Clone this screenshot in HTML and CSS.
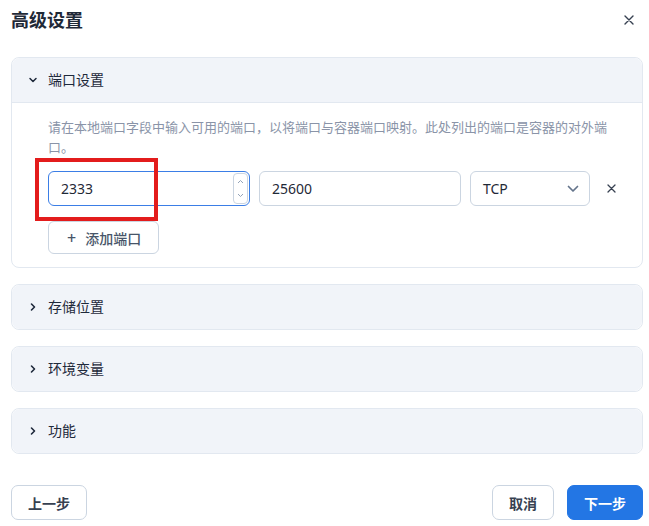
FILE: index.html
```html
<!DOCTYPE html>
<html>
<head>
    <meta charset="UTF-8">
    <title>高级设置</title>
    <link rel="stylesheet" href="styles.css">
</head>
<body>
    <div class="dialog">
        <div class="dialog-head">
            <h1>高级设置</h1>
            <button class="close" type="button">
                <svg width="10" height="10" viewBox="0 0 10 10"><path d="M1 1L9 9M9 1L1 9" stroke="#374151" stroke-width="1.4" stroke-linecap="round"/></svg>
            </button>
        </div>

        <div class="panel open">
            <div class="panel-head">
                <svg class="arrow" width="10" height="10" viewBox="0 0 10 10"><path d="M2 3.5L5 6.5L8 3.5" fill="none" stroke="#1e293b" stroke-width="1.5" stroke-linecap="round" stroke-linejoin="round"/></svg>
                <span>端口设置</span>
            </div>
            <div class="panel-body">
                <p class="desc">请在本地端口字段中输入可用的端口，以将端口与容器端口映射。此处列出的端口是容器的对外端口。</p>
                <div class="port-row">
                    <div class="field focus">
                        <span class="val">2333</span>
                        <span class="spin">
                            <svg width="7" height="5" viewBox="0 0 7 5"><path d="M1 4L3.5 1.5L6 4" fill="none" stroke="#94a3b8" stroke-width="1"/></svg>
                            <svg width="7" height="5" viewBox="0 0 7 5"><path d="M1 1L3.5 3.5L6 1" fill="none" stroke="#94a3b8" stroke-width="1"/></svg>
                        </span>
                    </div>
                    <div class="field"><span class="val">25600</span></div>
                    <div class="field select">
                        <span class="val">TCP</span>
                        <svg width="12" height="8" viewBox="0 0 12 8"><path d="M1.5 1.5L6 6L10.5 1.5" fill="none" stroke="#64748b" stroke-width="1.7" stroke-linecap="round" stroke-linejoin="round"/></svg>
                    </div>
                    <button class="remove" type="button">
                        <svg width="9" height="9" viewBox="0 0 9 9"><path d="M1 1L8 8M8 1L1 8" stroke="#374151" stroke-width="1.3" stroke-linecap="round"/></svg>
                    </button>
                </div>
                <button class="add" type="button"><span class="plus">+</span>添加端口</button>
            </div>
            <div class="mark"></div>
        </div>

        <div class="panel">
            <div class="panel-head">
                <svg class="arrow" width="10" height="10" viewBox="0 0 10 10"><path d="M3.5 2L6.5 5L3.5 8" fill="none" stroke="#1e293b" stroke-width="1.6" stroke-linecap="round" stroke-linejoin="round"/></svg>
                <span>存储位置</span>
            </div>
        </div>
        <div class="panel">
            <div class="panel-head">
                <svg class="arrow" width="10" height="10" viewBox="0 0 10 10"><path d="M3.5 2L6.5 5L3.5 8" fill="none" stroke="#1e293b" stroke-width="1.6" stroke-linecap="round" stroke-linejoin="round"/></svg>
                <span>环境变量</span>
            </div>
        </div>
        <div class="panel">
            <div class="panel-head">
                <svg class="arrow" width="10" height="10" viewBox="0 0 10 10"><path d="M3.5 2L6.5 5L3.5 8" fill="none" stroke="#1e293b" stroke-width="1.6" stroke-linecap="round" stroke-linejoin="round"/></svg>
                <span>功能</span>
            </div>
        </div>

        <div class="dialog-foot">
            <button class="btn" type="button">上一步</button>
            <div class="right">
                <button class="btn" type="button">取消</button>
                <button class="btn primary" type="button">下一步</button>
            </div>
        </div>
    </div>
</body>
</html>
```

FILE: styles.css
```css
body,p,h1{margin:0;}
body{
    background:#fff;
    font-family:"Noto Sans","Noto Sans CJK SC",sans-serif;
    color:#1e293b;
}
button{
    font-family:inherit;
    cursor:pointer;
}
.dialog{
    width:632px;
    padding:0 6px 0 11px;
}
.dialog-head{
    display:flex;
    align-items:center;
    justify-content:space-between;
    height:40px;
    margin-bottom:17px;
}
.dialog-head h1{
    font-size:18px;
    font-weight:700;
    color:#1f2937;
    line-height:24px;
}
.dialog-head .close{
    display:flex;
    align-items:center;
    justify-content:center;
    width:24px;
    height:24px;
    margin-right:2px;
    padding:0;
    border:none;
    background:none;
}
.panel{
    position:relative;
    border:1px solid #e2e8f0;
    border-radius:8px;
    margin-bottom:16px;
}
.panel-head{
    display:flex;
    align-items:center;
    height:44px;
    padding-left:16px;
    background:#f1f4f9;
    border-radius:8px;
    font-size:14px;
    line-height:20px;
    color:#1e293b;
}
.panel.open .panel-head{
    border-radius:8px 8px 0 0;
    border-bottom:1px solid #e2e8f0;
}
.panel-head .arrow{
    margin-right:10px;
}
.panel-body{
    padding:14px 19px 13px 36px;
}
.desc{
    margin-right:16px;
    font-size:13px;
    line-height:20px;
    color:#8a94a8;
}
.port-row{
    display:flex;
    align-items:center;
    gap:9px;
    margin-top:14px;
}
.field{
    display:flex;
    flex-shrink:0;
    align-items:center;
    box-sizing:border-box;
    width:202px;
    height:35px;
    padding:0 12px;
    border:1px solid #cbd5e1;
    border-radius:6px;
    font-size:14px;
    color:#1f2937;
}
.field .val{
    flex:1;
}
.field.focus{
    border-color:#3b7ee6;
    padding-right:1px;
}
.field .spin{
    display:flex;
    flex-direction:column;
    align-items:center;
    justify-content:space-around;
    box-sizing:border-box;
    width:15px;
    height:31px;
    border:1px solid #cbd5e1;
    border-radius:4px;
}
.field.select{
    width:120px;
    padding-right:10px;
}
.remove{
    display:flex;
    flex-shrink:0;
    align-items:center;
    justify-content:center;
    width:24px;
    height:24px;
    padding:0;
    border:none;
    background:none;
}
.add{
    display:flex;
    align-items:center;
    box-sizing:border-box;
    width:111px;
    height:33px;
    margin-top:15px;
    padding:0 0 0 18px;
    border:1px solid #cbd5e1;
    border-radius:6px;
    background:#fff;
    font-size:14px;
    font-weight:500;
    color:#475569;
}
.add .plus{
    font-size:16px;
    margin-right:9px;
    color:#475569;
}
.mark{
    position:absolute;
    left:23px;
    top:100px;
    width:115px;
    height:55px;
    border:4px solid #e31c1c;
}
.dialog-foot{
    display:flex;
    justify-content:space-between;
    margin-top:31px;
}
.dialog-foot .right{
    display:flex;
    gap:13px;
}
.btn{
    box-sizing:border-box;
    height:35px;
    padding:0 16px;
    border:1px solid #cbd5e1;
    border-radius:7px;
    background:#fff;
    font-size:14px;
    font-weight:700;
    color:#374151;
}
.btn.primary{
    border-color:#2376e4;
    background:#2376e4;
    color:#fff;
}
```
